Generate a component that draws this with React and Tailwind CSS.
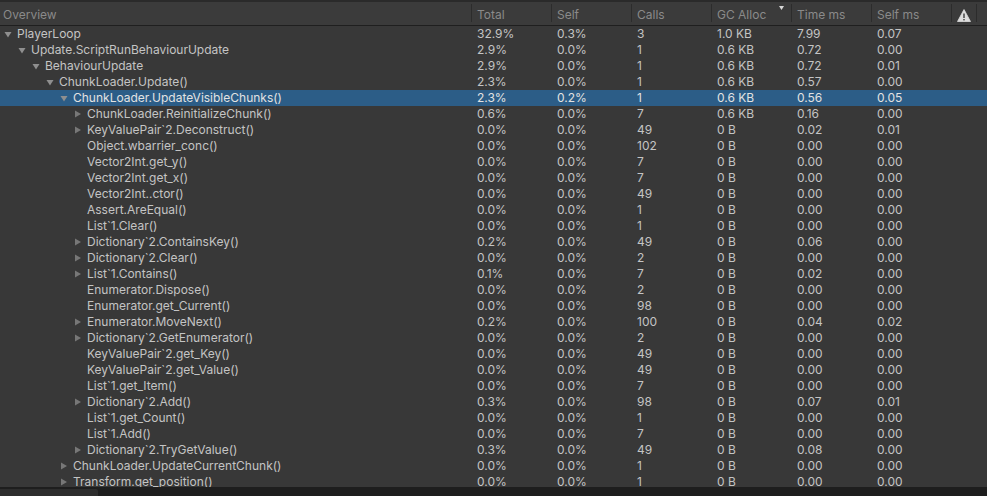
import React from "react";

const rows = [
  ["PlayerLoop", 0, "e", "32.9%", "0.3%", "3", "1.0 KB", "7.99", "0.07"],
  ["Update.ScriptRunBehaviourUpdate", 1, "e", "2.9%", "0.0%", "1", "0.6 KB", "0.72", "0.00"],
  ["BehaviourUpdate", 2, "e", "2.9%", "0.0%", "1", "0.6 KB", "0.72", "0.01"],
  ["ChunkLoader.Update()", 3, "e", "2.3%", "0.0%", "1", "0.6 KB", "0.57", "0.00"],
  ["ChunkLoader.UpdateVisibleChunks()", 4, "e", "2.3%", "0.2%", "1", "0.6 KB", "0.56", "0.05", true],
  ["ChunkLoader.ReinitializeChunk()", 5, "c", "0.6%", "0.0%", "7", "0.6 KB", "0.16", "0.00"],
  ["KeyValuePair`2.Deconstruct()", 5, "c", "0.0%", "0.0%", "49", "0 B", "0.02", "0.01"],
  ["Object.wbarrier_conc()", 5, "n", "0.0%", "0.0%", "102", "0 B", "0.00", "0.00"],
  ["Vector2Int.get_y()", 5, "n", "0.0%", "0.0%", "7", "0 B", "0.00", "0.00"],
  ["Vector2Int.get_x()", 5, "n", "0.0%", "0.0%", "7", "0 B", "0.00", "0.00"],
  ["Vector2Int..ctor()", 5, "n", "0.0%", "0.0%", "49", "0 B", "0.00", "0.00"],
  ["Assert.AreEqual()", 5, "n", "0.0%", "0.0%", "1", "0 B", "0.00", "0.00"],
  ["List`1.Clear()", 5, "n", "0.0%", "0.0%", "1", "0 B", "0.00", "0.00"],
  ["Dictionary`2.ContainsKey()", 5, "c", "0.2%", "0.0%", "49", "0 B", "0.06", "0.00"],
  ["Dictionary`2.Clear()", 5, "c", "0.0%", "0.0%", "2", "0 B", "0.00", "0.00"],
  ["List`1.Contains()", 5, "c", "0.1%", "0.0%", "7", "0 B", "0.02", "0.00"],
  ["Enumerator.Dispose()", 5, "n", "0.0%", "0.0%", "2", "0 B", "0.00", "0.00"],
  ["Enumerator.get_Current()", 5, "n", "0.0%", "0.0%", "98", "0 B", "0.00", "0.00"],
  ["Enumerator.MoveNext()", 5, "c", "0.2%", "0.0%", "100", "0 B", "0.04", "0.02"],
  ["Dictionary`2.GetEnumerator()", 5, "c", "0.0%", "0.0%", "2", "0 B", "0.00", "0.00"],
  ["KeyValuePair`2.get_Key()", 5, "n", "0.0%", "0.0%", "49", "0 B", "0.00", "0.00"],
  ["KeyValuePair`2.get_Value()", 5, "n", "0.0%", "0.0%", "49", "0 B", "0.00", "0.00"],
  ["List`1.get_Item()", 5, "n", "0.0%", "0.0%", "7", "0 B", "0.00", "0.00"],
  ["Dictionary`2.Add()", 5, "c", "0.3%", "0.0%", "98", "0 B", "0.07", "0.01"],
  ["List`1.get_Count()", 5, "n", "0.0%", "0.0%", "1", "0 B", "0.00", "0.00"],
  ["List`1.Add()", 5, "n", "0.0%", "0.0%", "7", "0 B", "0.00", "0.00"],
  ["Dictionary`2.TryGetValue()", 5, "c", "0.3%", "0.0%", "49", "0 B", "0.08", "0.00"],
  ["ChunkLoader.UpdateCurrentChunk()", 4, "c", "0.0%", "0.0%", "1", "0 B", "0.00", "0.00"],
  ["Transform.get_position()", 4, "c", "0.0%", "0.0%", "1", "0 B", "0.00", "0.00"],
];

const indent = [0, 14, 28, 42, 56, 70];

function Arrow({ kind }) {
  if (kind === "e") {
    return (
      <svg width="8" height="7" viewBox="0 0 8 7" className="shrink-0">
        <polygon points="0.5,1 7.5,1 4,6.5" fill="#8f8f8f" />
      </svg>
    );
  }
  if (kind === "c") {
    return (
      <svg width="8" height="8" viewBox="0 0 8 8" className="shrink-0">
        <polygon points="1,0.5 7,4 1,7.5" fill="#777777" />
      </svg>
    );
  }
  return <span className="inline-block w-[8px] shrink-0" />;
}

function Sep() {
  return <div className="w-px h-[18px] mt-[2px] bg-[#2c2c2c] shrink-0" />;
}

export default function App() {
  return (
    <div
      className="w-[987px] h-[496px] overflow-hidden flex flex-col bg-[#383838] text-[12px]"
      style={{ fontFamily: "Inter, 'Noto Sans', sans-serif" }}
    >
      <div className="h-[2px] bg-[#2a2a2a] shrink-0" />
      {/* header */}
      <div className="h-[23px] flex bg-[#3b3b3b] text-[#8a8a8a] shrink-0 leading-[16px]">
        <div className="w-[471px] pl-[3px] shrink-0 self-end pb-[2px]">Overview</div>
        {["Total", "Self", "Calls", "GC Alloc", "Time ms", "Self ms"].map((h) => (
          <div key={h} className="w-[80px] flex shrink-0 relative">
            <Sep />
            <span className="pl-[5px] self-end pb-[2px]">{h}</span>
            {h === "GC Alloc" && (
              <svg width="5" height="4" viewBox="0 0 5 4" className="absolute left-[68px] top-[4px]">
                <polygon points="0,0 5,0 2.5,4" fill="#d8d8d8" />
              </svg>
            )}
          </div>
        ))}
        <div className="w-[25px] flex shrink-0">
          <Sep />
          <div className="flex-1 flex justify-center pt-[7px]">
            <svg width="14" height="13" viewBox="0 0 14 13">
              <polygon points="7,0.5 13.5,12.5 0.5,12.5" fill="#dcdcdc" stroke="#dcdcdc" strokeWidth="0.8" strokeLinejoin="round" />
              <rect x="6.3" y="4.5" width="1.4" height="4.5" fill="#3a3a3a" />
              <rect x="6.3" y="10" width="1.4" height="1.4" fill="#3a3a3a" />
            </svg>
          </div>
        </div>
        <Sep />
      </div>
      <div className="h-px bg-[#1f1f1f] shrink-0" />
      {/* body */}
      <div className="flex-1 overflow-hidden">
        {rows.map((r, i) => {
          const [name, lvl, kind, ...vals] = r;
          const sel = r[9] === true;
          return (
            <div
              key={i}
              className={
                "h-[16px] flex items-center leading-[16px] " +
                (sel ? "bg-[#2c5d87] text-[#e2e2e2]" : "text-[#c4c4c4]")
              }
            >
              <div className="w-[472px] flex items-center shrink-0 whitespace-nowrap">
                <div className="shrink-0" style={{ width: indent[lvl] + 4 }} />
                <Arrow kind={kind} />
                <span className="pl-[5px]">{name}</span>
              </div>
              {vals.slice(0, 6).map((v, j) => (
                <div key={j} className="w-[80px] pl-[5px] shrink-0 whitespace-nowrap">
                  {v}
                </div>
              ))}
            </div>
          );
        })}
      </div>
      {/* bottom scrollbar */}
      <div className="h-[9px] bg-[#1e1e1e] shrink-0 pt-[2px]">
        <div className="w-[98px] h-full bg-[#2d2d2d] rounded-tr-[2px]" />
      </div>
    </div>
  );
}
